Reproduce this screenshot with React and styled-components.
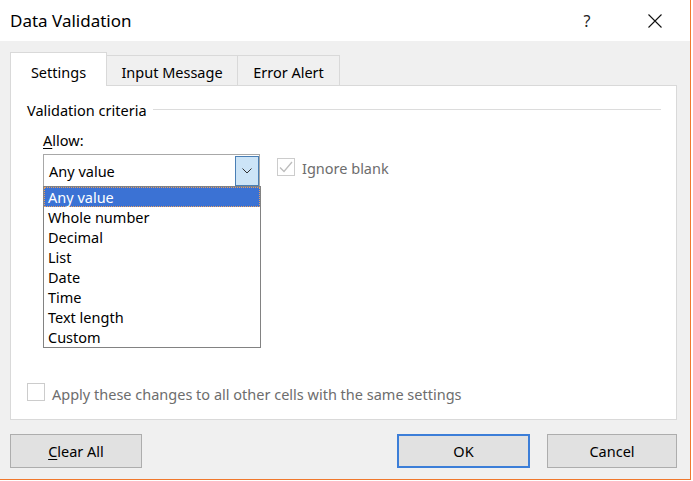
import React from "react";
import styled, { createGlobalStyle } from "styled-components";

const Global = createGlobalStyle`
  html, body { margin: 0; padding: 0; background: #ffffff; }
  body { font-family: "Noto Sans", "Open Sans", sans-serif; }
`;

const Window = styled.div`
  width: 691px;
  height: 480px;
  box-sizing: border-box;
  border-right: 1px solid #f0782d;
  border-bottom: 1px solid #f0782d;
  display: flex;
  flex-direction: column;
  font-family: "Noto Sans", "Open Sans", sans-serif;
  font-size: 14.5px;
  color: #000;
`;

const TitleBar = styled.div`
  height: 41px;
  flex: none;
  background: #fff;
  display: flex;
  align-items: center;
  padding-left: 10px;
`;

const Title = styled.div`
  flex: 1;
  font-size: 17px;
  color: #000;
`;

const Caption = styled.div`
  width: ${(p) => p.$w}px;
  height: 41px;
  display: flex;
  align-items: center;
  justify-content: center;
  font-size: 16px;
  color: #222;
`;

const Body = styled.div`
  flex: 1;
  background: #f0f0f0;
  display: flex;
  flex-direction: column;
  padding: 11px 13px 11px 10px;
`;

const TabRow = styled.div`
  display: flex;
  align-items: flex-end;
  height: 34px;
  flex: none;
  margin-bottom: -1px;
  position: relative;
  z-index: 1;
`;

const Tab = styled.div`
  box-sizing: border-box;
  width: ${(p) => p.$w}px;
  height: ${(p) => (p.$active ? 34 : 31)}px;
  background: ${(p) => (p.$active ? "#ffffff" : "#f0f0f0")};
  border: 1px solid #d9d9d9;
  border-bottom: ${(p) => (p.$active ? "none" : "1px solid #d9d9d9")};
  border-left: ${(p) => (p.$first || p.$active ? "1px solid #d9d9d9" : "none")};
  display: flex;
  align-items: center;
  justify-content: center;
  padding-top: ${(p) => (p.$active ? 4 : 2)}px;
`;

const Panel = styled.div`
  height: 335px;
  flex: none;
  box-sizing: border-box;
  background: #fff;
  border: 1px solid #d9d9d9;
  display: flex;
  flex-direction: column;
  padding: 14px 15px 15px 16px;
`;

const GroupHeader = styled.div`
  display: flex;
  align-items: center;
  gap: 6px;
  height: 20px;
  &::after {
    content: "";
    flex: 1;
    height: 1px;
    background: #dcdcdc;
    margin-top: -1px;
  }
`;

const Indent = styled.div`
  padding-left: 16px;
  margin-top: 10px;
  display: flex;
  flex-direction: column;
  gap: 4px;
`;

const Label = styled.div`
  height: 20px;
  line-height: 20px;
`;

const U = styled.span`
  text-decoration: underline;
  text-underline-offset: 2px;
`;

const ComboRow = styled.div`
  display: flex;
  align-items: flex-start;
  gap: 17px;
`;

const ComboWrap = styled.div`
  position: relative;
  width: 217px;
`;

const Combo = styled.div`
  box-sizing: border-box;
  height: 32px;
  border: 1px solid #a8a8a8;
  border-bottom: none;
  display: flex;
  align-items: center;
  padding-left: 5px;
  background: #fff;
`;

const ComboText = styled.div`
  flex: 1;
`;

const ComboButton = styled.div`
  box-sizing: border-box;
  width: 24px;
  height: 30px;
  margin-top: 1px;
  background: #cce4f7;
  border: 1px solid #4a7fb5;
  display: flex;
  align-items: center;
  justify-content: center;
`;

const List = styled.div`
  position: absolute;
  top: 32px;
  left: 0;
  width: 218px;
  box-sizing: border-box;
  border: 1px solid #828282;
  background: #fff;
  z-index: 2;
`;

const Item = styled.div`
  box-sizing: border-box;
  height: 20px;
  line-height: 18px;
  padding-left: 3px;
  border: 1px ${(p) => (p.$selected ? "dotted #e8a060" : "solid transparent")};
  background: ${(p) => (p.$selected ? "#3b72d4" : "transparent")};
  color: ${(p) => (p.$selected ? "#fff" : "#000")};
`;

const CheckRow = styled.div`
  display: flex;
  align-items: center;
  gap: 7px;
  color: #6d6d6d;
  margin-top: ${(p) => p.$mt || 0}px;
`;

const CheckText = styled.span`
  margin-top: ${(p) => p.$drop || 0}px;
`;

const Box = styled.div`
  box-sizing: border-box;
  width: 18px;
  height: 18px;
  border: 1px solid #cccccc;
  background: #fff;
  display: flex;
  align-items: center;
  justify-content: center;
`;

const Spacer = styled.div`
  flex: 1;
`;

const Footer = styled.div`
  display: flex;
  margin-top: 14px;
  gap: 17px;
`;

const Button = styled.div`
  box-sizing: border-box;
  width: ${(p) => p.$w}px;
  height: 34px;
  background: #e1e1e1;
  border: ${(p) => (p.$default ? "2px solid #3c7ed8" : "1px solid #adadad")};
  display: flex;
  align-items: center;
  justify-content: center;
  margin-right: ${(p) => (p.$push ? "auto" : "0")};
`;

const items = ["Any value", "Whole number", "Decimal", "List", "Date", "Time", "Text length", "Custom"];

export default function App() {
  return (
    <>
      <Global />
      <Window>
        <TitleBar>
          <Title>Data Validation</Title>
          <Caption $w={66}>?</Caption>
          <Caption $w={70}>
            <svg width="14" height="14" viewBox="0 0 14 14">
              <path d="M0.5 0.5 L13.5 13.5 M13.5 0.5 L0.5 13.5" stroke="#111" strokeWidth="1.1" fill="none" />
            </svg>
          </Caption>
        </TitleBar>
        <Body>
          <TabRow>
            <Tab $w={97} $active $first>Settings</Tab>
            <Tab $w={131}>Input Message</Tab>
            <Tab $w={102}>Error Alert</Tab>
          </TabRow>
          <Panel>
            <GroupHeader>Validation criteria</GroupHeader>
            <Indent>
              <Label>
                <U>A</U>llow:
              </Label>
              <ComboRow>
                <ComboWrap>
                  <Combo>
                    <ComboText>Any value</ComboText>
                    <ComboButton>
                      <svg width="10" height="6" viewBox="0 0 10 6">
                        <path d="M0.5 0.5 L5 5 L9.5 0.5" stroke="#333" strokeWidth="1" fill="none" />
                      </svg>
                    </ComboButton>
                  </Combo>
                  <List>
                    {items.map((it, i) => (
                      <Item key={it} $selected={i === 0}>
                        {it}
                      </Item>
                    ))}
                  </List>
                </ComboWrap>
                <CheckRow $mt={2}>
                  <Box>
                    <svg width="14" height="12" viewBox="0 0 14 12">
                      <path d="M1 6.5 L5 10.5 L13 1" stroke="#bdbdbd" strokeWidth="1.3" fill="none" />
                    </svg>
                  </Box>
                  <CheckText $drop={2}>Ignore blank</CheckText>
                </CheckRow>
              </ComboRow>
            </Indent>
            <Spacer />
            <CheckRow>
              <Box />
              <CheckText $drop={4}>Apply these changes to all other cells with the same settings</CheckText>
            </CheckRow>
          </Panel>
          <Footer>
            <Button $w={132} $push>
              <span>
                <U>C</U>lear All
              </span>
            </Button>
            <Button $w={133} $default>OK</Button>
            <Button $w={130}>Cancel</Button>
          </Footer>
        </Body>
      </Window>
    </>
  );
}
